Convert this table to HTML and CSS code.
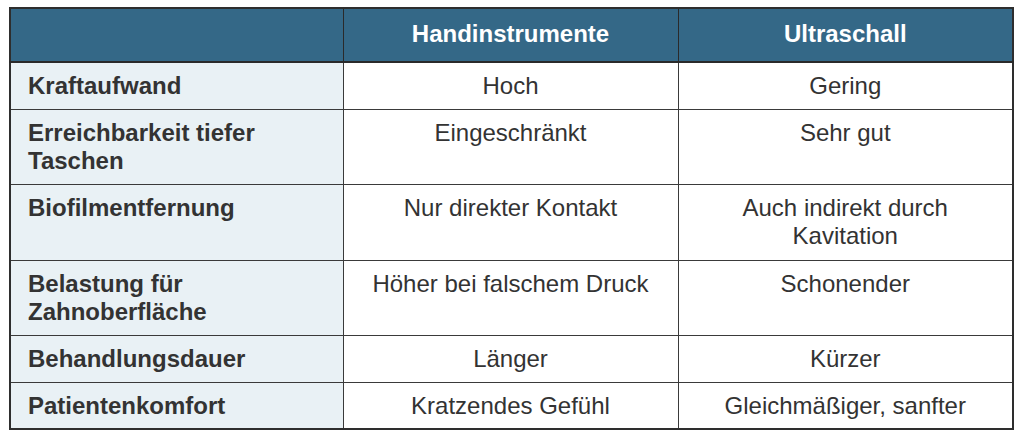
FILE: index.html
```html
<!DOCTYPE html>
<html lang="de">
<head>
<meta charset="utf-8">
<title>Vergleich</title>
<link rel="stylesheet" href="styles.css">
</head>
<body>
<div class="wrap">
<table class="cmp">
  <colgroup>
    <col class="c1"><col class="c2"><col class="c3">
  </colgroup>
  <thead>
    <tr><th class="corner"></th><th>Handinstrumente</th><th>Ultraschall</th></tr>
  </thead>
  <tbody>
    <tr><td class="label">Kraftaufwand</td><td>Hoch</td><td>Gering</td></tr>
    <tr><td class="label">Erreichbarkeit tiefer Taschen</td><td>Eingeschränkt</td><td>Sehr gut</td></tr>
    <tr class="tall"><td class="label">Biofilmentfernung</td><td>Nur direkter Kontakt</td><td>Auch indirekt durch Kavitation</td></tr>
    <tr><td class="label">Belastung für Zahnoberfläche</td><td>Höher bei falschem Druck</td><td>Schonender</td></tr>
    <tr><td class="label">Behandlungsdauer</td><td>Länger</td><td>Kürzer</td></tr>
    <tr class="last"><td class="label">Patientenkomfort</td><td>Kratzendes Gefühl</td><td>Gleichmäßiger, sanfter</td></tr>
  </tbody>
</table>
</div>
</body>
</html>
```
FILE: styles.css
```css
html, body {
  margin: 0;
  padding: 0;
  background: #ffffff;
}
.wrap {
  padding: 7px 0 0 9px;
}
.cmp {
  width: 1003px;
  table-layout: fixed;
  border-collapse: collapse;
  border: 2px solid #2e2e2e;
  font-family: "Liberation Sans", Arial, sans-serif;
  font-size: 24px;
  line-height: 28px;
  color: #333333;
}
.c1 { width: 333px; }
.c2 { width: 335px; }
.c3 { width: 335px; }
.cmp th {
  background: #346887;
  color: #ffffff;
  font-weight: bold;
  text-align: center;
  padding: 11px 12px 13px;
  border: 1px solid #2a2a2a;
  border-bottom: 2px solid #2a2a2a;
}
.cmp td {
  vertical-align: top;
  text-align: center;
  padding: 9px 12px 9px;
  border: 1px solid #3a3a3a;
  background: #ffffff;
}
.cmp tr.tall td {
  padding-bottom: 10px;
}
.cmp tr.last td {
  padding-bottom: 8px;
}
.cmp td.label {
  text-align: left;
  font-weight: bold;
  background: #e9f1f5;
  padding-left: 17px;
  padding-right: 60px;
}
```
